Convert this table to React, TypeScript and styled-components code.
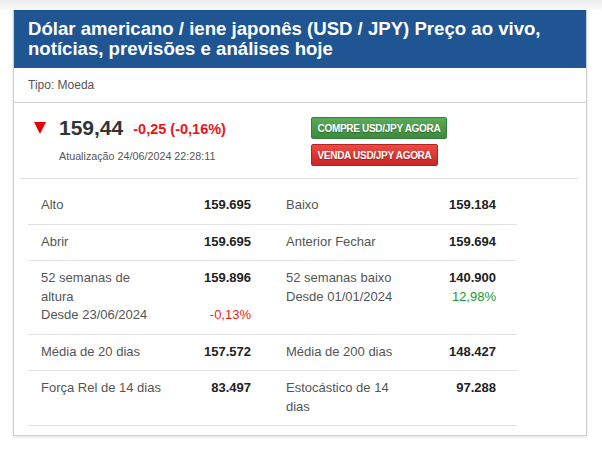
import React from 'react';
import styled, { createGlobalStyle } from 'styled-components';

const Global = createGlobalStyle`
  html, body { margin: 0; padding: 0; background: #fff; }
  body { font-family: "Liberation Sans", Arial, sans-serif; }
  * { box-sizing: border-box; }
`;

const Page = styled.div`
  width: 602px;
  height: 449px;
  background: #fff;
  overflow: hidden;
`;

const TopShade = styled.div`
  height: 10px;
  background: linear-gradient(to bottom, #ececec, #fbfbfb);
`;

const Card = styled.section`
  width: 574px;
  margin-left: 13px;
  border: 1px solid #cfcfcf;
  border-top: none;
  background: #fff;
  box-shadow: 0 1px 3px rgba(0, 0, 0, 0.12);
  padding-bottom: 9px;
`;

const Header = styled.h1`
  margin: 0;
  background: #1f5593;
  color: #fff;
  font-size: 18.6px;
  font-weight: bold;
  line-height: 20px;
  padding: 9px 14px;
`;

const TypeRow = styled.div`
  height: 35px;
  display: flex;
  align-items: center;
  padding-left: 14px;
  font-size: 12px;
  color: #555;
  border-bottom: 1px solid #d4d4d4;
`;

const PriceSection = styled.div`
  margin: 0 8px 0 6px;
  padding: 14px 0 12px 14px;
  border-bottom: 1px solid #dedede;
  display: flex;
`;

const PriceCol = styled.div`
  width: 277px;
  display: flex;
  flex-direction: column;
`;

const PriceLine = styled.div`
  display: flex;
  align-items: center;
  height: 22px;
`;

const DownArrow = styled.span`
  width: 0;
  height: 0;
  border-left: 6px solid transparent;
  border-right: 6px solid transparent;
  border-top: 12px solid #e60000;
  margin-right: 13px;
`;

const Price = styled.span`
  font-size: 21px;
  font-weight: bold;
  color: #333;
  margin-right: 10px;
`;

const Change = styled.span`
  font-size: 14.5px;
  font-weight: bold;
  color: #e8141c;
  margin-top: 2px;
`;

const Updated = styled.div`
  font-size: 10.75px;
  color: #555;
  margin: 11px 0 0 25px;
`;

const Buttons = styled.div`
  display: flex;
  flex-direction: column;
  align-items: flex-start;
  gap: 5px;
`;

const TradeButton = styled.button<{ $tone: 'buy' | 'sell' }>`
  font-family: "Liberation Sans", Arial, sans-serif;
  font-size: 10px;
  font-weight: bold;
  letter-spacing: -0.3px;
  color: #fff;
  text-shadow: 0 1px 1px rgba(0, 0, 0, 0.35);
  height: 22px;
  padding: 0 5.5px;
  border-radius: 2px;
  border: 1px solid ${(p) => (p.$tone === 'buy' ? '#3a7d3a' : '#b52222')};
  background: ${(p) =>
    p.$tone === 'buy'
      ? 'linear-gradient(to bottom, #5aab5a, #3c8a3c)'
      : 'linear-gradient(to bottom, #ec4a42, #c92626)'};
  cursor: pointer;
`;

const Table = styled.div`
  width: 489px;
  margin: 9px 0 0 14px;
`;

const Row = styled.div`
  display: flex;
  align-items: flex-start;
  gap: 35px;
  padding: 8px 21px 9px 13px;
  border-bottom: 1px solid #e2e2e2;
  font-size: 13px;
  line-height: 18.5px;
`;

const Half = styled.div`
  width: 210px;
  display: flex;
  align-items: stretch;
`;

const Label = styled.div`
  flex: 0 0 122px;
  color: #555;
`;

const ValueCell = styled.div`
  flex: 1;
  display: flex;
  flex-direction: column;
  align-items: flex-end;
`;

const Value = styled.span`
  font-weight: bold;
  color: #222;
`;

const Delta = styled.span<{ $tone: 'up' | 'down' }>`
  margin-top: auto;
  color: ${(p) => (p.$tone === 'up' ? '#24962b' : '#ee1c1c')};
`;

type Stat = { label: string; sub?: string; value: string; change?: string; tone?: 'up' | 'down' };

const rows: Stat[][] = [
  [
    { label: 'Alto', value: '159.695' },
    { label: 'Baixo', value: '159.184' },
  ],
  [
    { label: 'Abrir', value: '159.695' },
    { label: 'Anterior Fechar', value: '159.694' },
  ],
  [
    { label: '52 semanas de altura', sub: 'Desde 23/06/2024', value: '159.896', change: '-0,13%', tone: 'down' },
    { label: '52 semanas baixo', sub: 'Desde 01/01/2024', value: '140.900', change: '12,98%', tone: 'up' },
  ],
  [
    { label: 'Média de 20 dias', value: '157.572' },
    { label: 'Média de 200 dias', value: '148.427' },
  ],
  [
    { label: 'Força Rel de 14 dias', value: '83.497' },
    { label: 'Estocástico de 14 dias', value: '97.288' },
  ],
];

function StatHalf({ s }: { s: Stat }) {
  return (
    <Half>
      <Label>
        {s.label}
        {s.sub && <div>{s.sub}</div>}
      </Label>
      <ValueCell>
        <Value>{s.value}</Value>
        {s.change && <Delta $tone={s.tone || 'up'}>{s.change}</Delta>}
      </ValueCell>
    </Half>
  );
}

export default function App() {
  return (
    <Page>
      <Global />
      <TopShade />
      <Card>
        <Header>
          Dólar americano / iene japonês (USD / JPY) Preço ao vivo, notícias, previsões e análises hoje
        </Header>
        <TypeRow>Tipo: Moeda</TypeRow>
        <PriceSection>
          <PriceCol>
            <PriceLine>
              <DownArrow />
              <Price>159,44</Price>
              <Change>-0,25 (-0,16%)</Change>
            </PriceLine>
            <Updated>Atualização 24/06/2024 22:28:11</Updated>
          </PriceCol>
          <Buttons>
            <TradeButton $tone="buy">COMPRE USD/JPY AGORA</TradeButton>
            <TradeButton $tone="sell">VENDA USD/JPY AGORA</TradeButton>
          </Buttons>
        </PriceSection>
        <Table>
          {rows.map((r, i) => (
            <Row key={i}>
              <StatHalf s={r[0]} />
              <StatHalf s={r[1]} />
            </Row>
          ))}
        </Table>
      </Card>
    </Page>
  );
}
